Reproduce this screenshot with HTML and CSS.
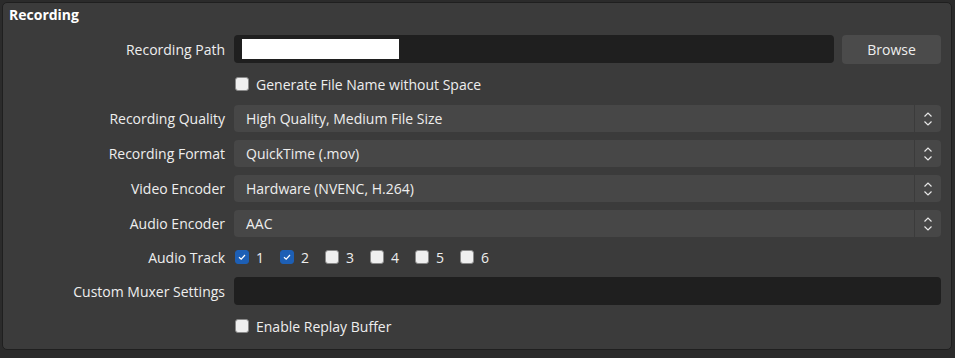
FILE: index.html
```html
<!DOCTYPE html>
<html>
<head>
  <title>Output Settings - Recording</title>
  <link rel="stylesheet" href="styles.css">
</head>
<body>
  <div class="group">
    <div class="group-title">Recording</div>
    <div class="form">

      <label class="label row-path">Recording Path</label>
      <div class="field row-path path-field">
        <div class="line-edit"><span class="redacted"></span></div>
        <button class="btn">Browse</button>
      </div>

      <div class="label row-check"></div>
      <div class="field row-check">
        <label class="check"><span class="box"></span>Generate File Name without Space</label>
      </div>

      <label class="label row-combo">Recording Quality</label>
      <div class="field row-combo">
        <div class="combo"><span class="combo-text">High Quality, Medium File Size</span><span class="combo-arrows"><svg width="10" height="16" viewBox="0 0 10 16"><path d="M1.5 5.5 L5 2 L8.5 5.5 M1.5 10.5 L5 14 L8.5 10.5" fill="none" stroke="#e8e8e8" stroke-width="1.2"/></svg></span></div>
      </div>

      <label class="label row-combo">Recording Format</label>
      <div class="field row-combo">
        <div class="combo"><span class="combo-text">QuickTime (.mov)</span><span class="combo-arrows"><svg width="10" height="16" viewBox="0 0 10 16"><path d="M1.5 5.5 L5 2 L8.5 5.5 M1.5 10.5 L5 14 L8.5 10.5" fill="none" stroke="#e8e8e8" stroke-width="1.2"/></svg></span></div>
      </div>

      <label class="label row-combo">Video Encoder</label>
      <div class="field row-combo">
        <div class="combo"><span class="combo-text">Hardware (NVENC, H.264)</span><span class="combo-arrows"><svg width="10" height="16" viewBox="0 0 10 16"><path d="M1.5 5.5 L5 2 L8.5 5.5 M1.5 10.5 L5 14 L8.5 10.5" fill="none" stroke="#e8e8e8" stroke-width="1.2"/></svg></span></div>
      </div>

      <label class="label row-combo">Audio Encoder</label>
      <div class="field row-combo">
        <div class="combo"><span class="combo-text">AAC</span><span class="combo-arrows"><svg width="10" height="16" viewBox="0 0 10 16"><path d="M1.5 5.5 L5 2 L8.5 5.5 M1.5 10.5 L5 14 L8.5 10.5" fill="none" stroke="#e8e8e8" stroke-width="1.2"/></svg></span></div>
      </div>

      <label class="label row-tracks">Audio Track</label>
      <div class="field row-tracks tracks">
        <label class="check track"><span class="box checked"><svg width="10" height="10" viewBox="0 0 10 10"><path d="M2 5.2 L4.2 7.2 L8 3" fill="none" stroke="#fff" stroke-width="1.2"/></svg></span>1</label>
        <label class="check track"><span class="box checked"><svg width="10" height="10" viewBox="0 0 10 10"><path d="M2 5.2 L4.2 7.2 L8 3" fill="none" stroke="#fff" stroke-width="1.2"/></svg></span>2</label>
        <label class="check track"><span class="box"></span>3</label>
        <label class="check track"><span class="box"></span>4</label>
        <label class="check track"><span class="box"></span>5</label>
        <label class="check track"><span class="box"></span>6</label>
      </div>

      <label class="label row-path">Custom Muxer Settings</label>
      <div class="field row-path">
        <div class="line-edit"></div>
      </div>

      <div class="label row-check"></div>
      <div class="field row-check">
        <label class="check"><span class="box"></span>Enable Replay Buffer</label>
      </div>

    </div>
  </div>
</body>
</html>
```

FILE: styles.css
```css
body {
  font-family: 'Open Sans', 'Liberation Sans', sans-serif;
  font-size: 14px;
  background-color: #2b2b2b;
  color: #eeeeee;
  margin: 0;
  padding: 2px;
}
.group {
  width: 948px;
  height: 346px;
  background-color: #3b3b3b;
  border: 1px solid #1f1f1f;
  border-radius: 5px;
}
.group-title {
  font-weight: bold;
  padding: 2px 0 0 6px;
  height: 29px;
  box-sizing: border-box;
  color: #ffffff;
}
.form {
  display: grid;
  grid-template-columns: 222px 1fr;
  column-gap: 9px;
  row-gap: 8px;
  padding: 3px 10px 0 0;
}
.label {
  display: flex;
  align-items: center;
  justify-content: flex-end;
  color: #eeeeee;
}
.field {
  display: flex;
  align-items: center;
}
.row-path {
  height: 28px;
}
.row-check {
  height: 26px;
}
.row-combo {
  height: 27px;
}
.row-tracks {
  height: 24px;
}
.path-field {
  gap: 8px;
}
.line-edit {
  flex-grow: 1;
  height: 28px;
  background-color: #1f1f1f;
  border-radius: 4px;
  display: flex;
  align-items: center;
  padding-left: 8px;
  box-sizing: border-box;
}
.redacted {
  display: block;
  width: 157px;
  height: 20px;
  background-color: #ffffff;
}
.btn {
  width: 99px;
  height: 29px;
  border: none;
  border-radius: 4px;
  background-color: #4b4b4b;
  color: #eeeeee;
  font-family: inherit;
  font-size: 14px;
  padding: 0;
}
.combo {
  flex-grow: 1;
  height: 27px;
  background-color: #474747;
  border-radius: 4px;
  display: flex;
  align-items: center;
}
.combo-text {
  flex-grow: 1;
  padding-left: 12px;
}
.combo-arrows {
  width: 26px;
  height: 27px;
  border-left: 1px solid #3b3b3b;
  display: flex;
  align-items: center;
  justify-content: center;
}
.check {
  display: flex;
  align-items: center;
  gap: 7px;
  padding-left: 1px;
}
.box {
  width: 14px;
  height: 14px;
  box-sizing: border-box;
  background-color: #efefef;
  border: 1px solid #8a8a8a;
  border-radius: 3px;
  display: flex;
  align-items: center;
  justify-content: center;
}
.box.checked {
  background-color: #1d5fb5;
  border-color: #1d5fb5;
}
.tracks {
  gap: 0;
}
.track {
  width: 45px;
  box-sizing: border-box;
}
```
